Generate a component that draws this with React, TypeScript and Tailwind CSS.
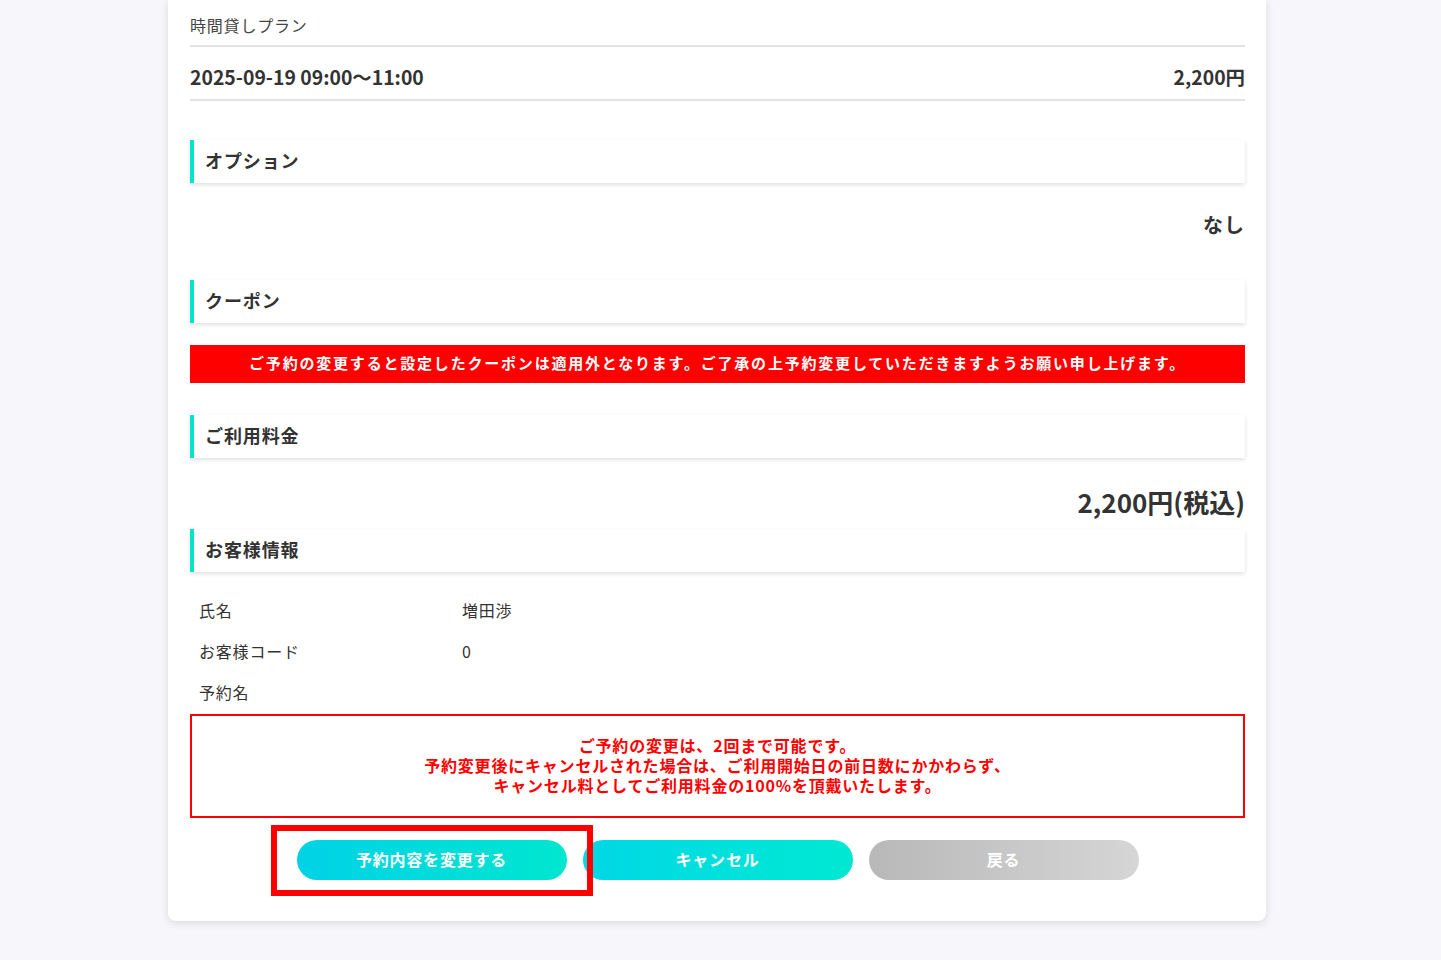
import React from 'react'

const font = { fontFamily: '"Noto Sans CJK JP", "Noto Sans", sans-serif' }

function SectionHeader({ title }: { title: string }) {
  return (
    <div className="h-[43px] flex items-center bg-white border-l-4 border-[#00e4c9] pl-[11px] pb-[3px] shadow-[0_2px_4px_rgba(0,0,0,0.12)]">
      <h2 className="text-[18px] font-bold text-[#333] tracking-[0.05em]">{title}</h2>
    </div>
  )
}

export default function App() {
  const rows = [
    { label: '氏名', value: '増田渉' },
    { label: 'お客様コード', value: '0' },
    { label: '予約名', value: '' },
  ]

  return (
    <div className="min-h-screen bg-[#f7f7fb] text-[#333]" style={font}>
      <div className="relative ml-[168px] w-[1098px] bg-white rounded-b-lg shadow-[0_2px_8px_rgba(0,0,0,0.12)] pl-[22px] pr-[21px] pt-[13px] pb-[41px]">
        {/* PLAN */}
        <div className="border-b-2 border-[#e2e2e2] pb-[8px] text-[16px] leading-[24px] text-[#444] tracking-[0.05em]">
          時間貸しプラン
        </div>
        <div className="flex items-center justify-between border-b-2 border-[#e2e2e2] pt-[15px] pb-[7px] text-[19.4px] leading-[30px] font-bold">
          <span>2025-09-19 09:00〜11:00</span>
          <span>2,200円</span>
        </div>

        {/* OPTION */}
        <div className="mt-[39px]">
          <SectionHeader title="オプション" />
        </div>
        <div className="pt-[27px] pb-[40px] text-right text-[20px] leading-[30px] font-bold tracking-[0.05em]">
          なし
        </div>

        {/* COUPON */}
        <SectionHeader title="クーポン" />
        <div className="mt-[22px] h-[38px] bg-[#ff0000] flex items-center justify-center pb-[2px] text-white text-[15px] font-bold tracking-[1.8px]">
          ご予約の変更すると設定したクーポンは適用外となります。ご了承の上予約変更していただきますようお願い申し上げます。
        </div>

        {/* PRICE */}
        <div className="mt-[32px]">
          <SectionHeader title="ご利用料金" />
        </div>
        <div className="mt-[26px] mb-[9px] text-right text-[26px] leading-[36px] font-bold">
          2,200円(税込)
        </div>

        {/* CUSTOMER */}
        <SectionHeader title="お客様情報" />
        <div className="mt-[19px]">
          {rows.map((r) => (
            <div key={r.label} className="h-[41px] flex items-center pl-[9px] pb-[3px] text-[16px] tracking-[0.05em]">
              <span className="w-[263px]">{r.label}</span>
              <span>{r.value}</span>
            </div>
          ))}
        </div>

        <div className="border-2 border-[#ff0000] pt-[19px] pb-[21px] text-center text-[#ff0000] text-[16px] leading-[20px] font-bold tracking-[0.05em]">
          <p>ご予約の変更は、2回まで可能です。</p>
          <p>予約変更後にキャンセルされた場合は、ご利用開始日の前日数にかかわらず、</p>
          <p>キャンセル料としてご利用料金の100%を頂戴いたします。</p>
        </div>

        {/* BUTTONS */}
        <div className="mt-[22px] flex justify-center gap-[16px]">
          <button className="relative w-[270px] h-[40px] rounded-full bg-gradient-to-r from-[#00d2e6] to-[#00e6cf] pb-[3px] text-white text-[16px] font-bold tracking-[0.05em]">
            予約内容を変更する
            <span className="absolute -left-[26px] -top-[15px] w-[322px] h-[71px] border-[6px] border-[#ff0000] pointer-events-none" />
          </button>
          <button className="w-[270px] h-[40px] rounded-full bg-gradient-to-r from-[#00d8e6] to-[#00e8d2] pb-[3px] text-white text-[16px] font-bold tracking-[0.05em]">
            キャンセル
          </button>
          <button className="w-[270px] h-[40px] rounded-full bg-gradient-to-r from-[#b8b8b8] to-[#d6d6d6] pb-[3px] text-white text-[16px] font-bold tracking-[0.05em]">
            戻る
          </button>
        </div>
      </div>
    </div>
  )
}
